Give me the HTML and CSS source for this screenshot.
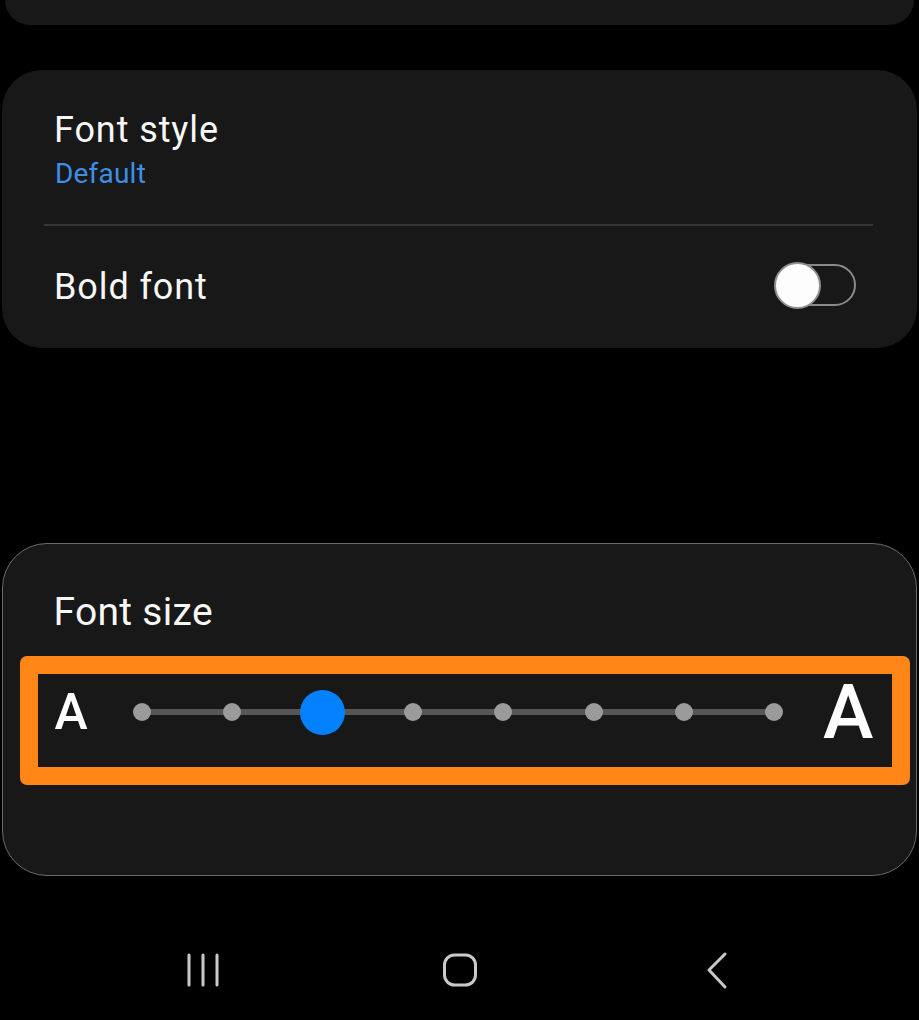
FILE: index.html
```html
<!DOCTYPE html>
<html lang="en">
<head>
<meta charset="utf-8">
<title>Font size and style</title>
<link rel="stylesheet" href="styles.css">
</head>
<body>
<div class="top-card"></div>

<section class="card style-card">
  <div class="item">
    <div class="item-title">Font style</div>
    <div class="item-sub">Default</div>
  </div>
  <div class="divider"></div>
  <div class="item-row">
    <div class="item-title">Bold font</div>
    <div class="toggle"><span class="knob"></span></div>
  </div>
</section>

<section class="card size-card">
  <div class="size-title">Font size</div>
  <div class="highlight">
    <div class="a-small">A</div>
    <div class="slider">
      <span class="stop"><span class="dot"></span></span>
      <span class="stop"><span class="dot"></span></span>
      <span class="stop"><span class="dot dot-active"></span></span>
      <span class="stop"><span class="dot"></span></span>
      <span class="stop"><span class="dot"></span></span>
      <span class="stop"><span class="dot"></span></span>
      <span class="stop"><span class="dot"></span></span>
      <span class="stop"><span class="dot"></span></span>
    </div>
    <div class="a-big">A</div>
  </div>
</section>

<nav class="navbar">
  <span class="nav-btn">
    <svg width="40" height="40" viewBox="0 0 40 40"><g stroke="#c9c9c9" stroke-width="3" stroke-linecap="round" fill="none"><line x1="6" y1="5" x2="6" y2="35"/><line x1="20" y1="5" x2="20" y2="35"/><line x1="34" y1="5" x2="34" y2="35"/></g></svg>
  </span>
  <span class="nav-btn">
    <svg width="40" height="40" viewBox="0 0 40 40"><rect x="4.5" y="5" width="31" height="30" rx="10" stroke="#c9c9c9" stroke-width="3" fill="none"/></svg>
  </span>
  <span class="nav-btn">
    <svg width="40" height="40" viewBox="0 0 40 40"><polyline points="28,4 12,20 28,37" stroke="#c9c9c9" stroke-width="3" stroke-linecap="round" stroke-linejoin="round" fill="none"/></svg>
  </span>
</nav>
</body>
</html>
```

FILE: styles.css
```css
html, body {
  margin: 0;
  padding: 0;
  background: #000;
}
body {
  width: 919px;
  height: 1020px;
  overflow: hidden;
  font-family: Roboto, "Noto Sans", "Liberation Sans", sans-serif;
  color: #f7f7f7;
}
.top-card {
  height: 25px;
  margin: 0 5px;
  background: #181818;
  border-radius: 0 0 38px 38px;
}
.card {
  background: #181818;
  margin: 0 2px;
  border-radius: 40px;
  box-sizing: border-box;
}
.style-card {
  margin-top: 45px;
  height: 278px;
}
.item {
  padding: 38px 52px 0;
}
.item-title {
  font-size: 36px;
  line-height: 44px;
  font-weight: 400;
  letter-spacing: 0.9px;
}
.item-sub {
  margin-top: 5px;
  font-size: 28px;
  line-height: 34px;
  color: #3d8fe6;
  letter-spacing: 0.2px;
  margin-left: 1px;
}
.divider {
  margin: 33px 44px 0 42px;
  height: 2px;
  background: #363636;
}
.item-row {
  height: 122px;
  display: flex;
  align-items: center;
  justify-content: space-between;
  padding: 0 61px 0 52px;
  box-sizing: border-box;
}
.toggle {
  width: 81px;
  height: 42px;
  box-sizing: border-box;
  border: 2.5px solid #8a8a8a;
  border-radius: 21px;
  display: flex;
  align-items: center;
  margin-top: -4px;
}
.knob {
  flex: none;
  width: 47px;
  height: 47px;
  margin-left: -3px;
  box-sizing: border-box;
  border-radius: 50%;
  background: #fdfdfd;
  border: 2px solid #8f8f8f;
}
.size-card {
  margin-top: 195px;
  height: 333px;
  border: 1.5px solid #6a6a6a;
  border-radius: 45px;
  padding-top: 46px;
}
.size-title {
  padding-left: 50.5px;
  font-size: 39px;
  line-height: 44px;
  letter-spacing: 0.3px;
}
.highlight {
  margin: 22px 6.5px 0 16.5px;
  height: 129px;
  box-sizing: border-box;
  border: 18px solid #ff8617;
  border-radius: 7px;
  display: flex;
  align-items: center;
  padding-bottom: 17px;
  padding-left: 17px;
}
.a-small {
  width: 78px;
  flex: none;
  font-size: 50px;
  line-height: 1;
  font-weight: 500;
  color: #fff;
}
.slider {
  flex: none;
  width: 651px;
  height: 18px;
  display: flex;
  justify-content: space-between;
  align-items: center;
  background: linear-gradient(#565656, #565656) no-repeat center / calc(100% - 18px) 6px;
}
.stop {
  width: 18px;
  height: 18px;
  display: flex;
  justify-content: center;
  align-items: center;
}
.dot {
  flex: none;
  width: 18px;
  height: 18px;
  border-radius: 50%;
  background: #9b9b9b;
}
.dot-active {
  width: 45px;
  height: 45px;
  background: #0381fe;
}
.a-big {
  flex: 1;
  text-align: right;
  padding-right: 18px;
  font-size: 76px;
  line-height: 1;
  font-weight: 500;
  color: #fff;
}
.navbar {
  margin-top: 74px;
  height: 40px;
  display: flex;
  gap: 217px;
  padding-left: 183px;
}
.nav-btn {
  width: 40px;
  height: 40px;
  display: block;
}
.nav-btn svg {
  display: block;
}
```
